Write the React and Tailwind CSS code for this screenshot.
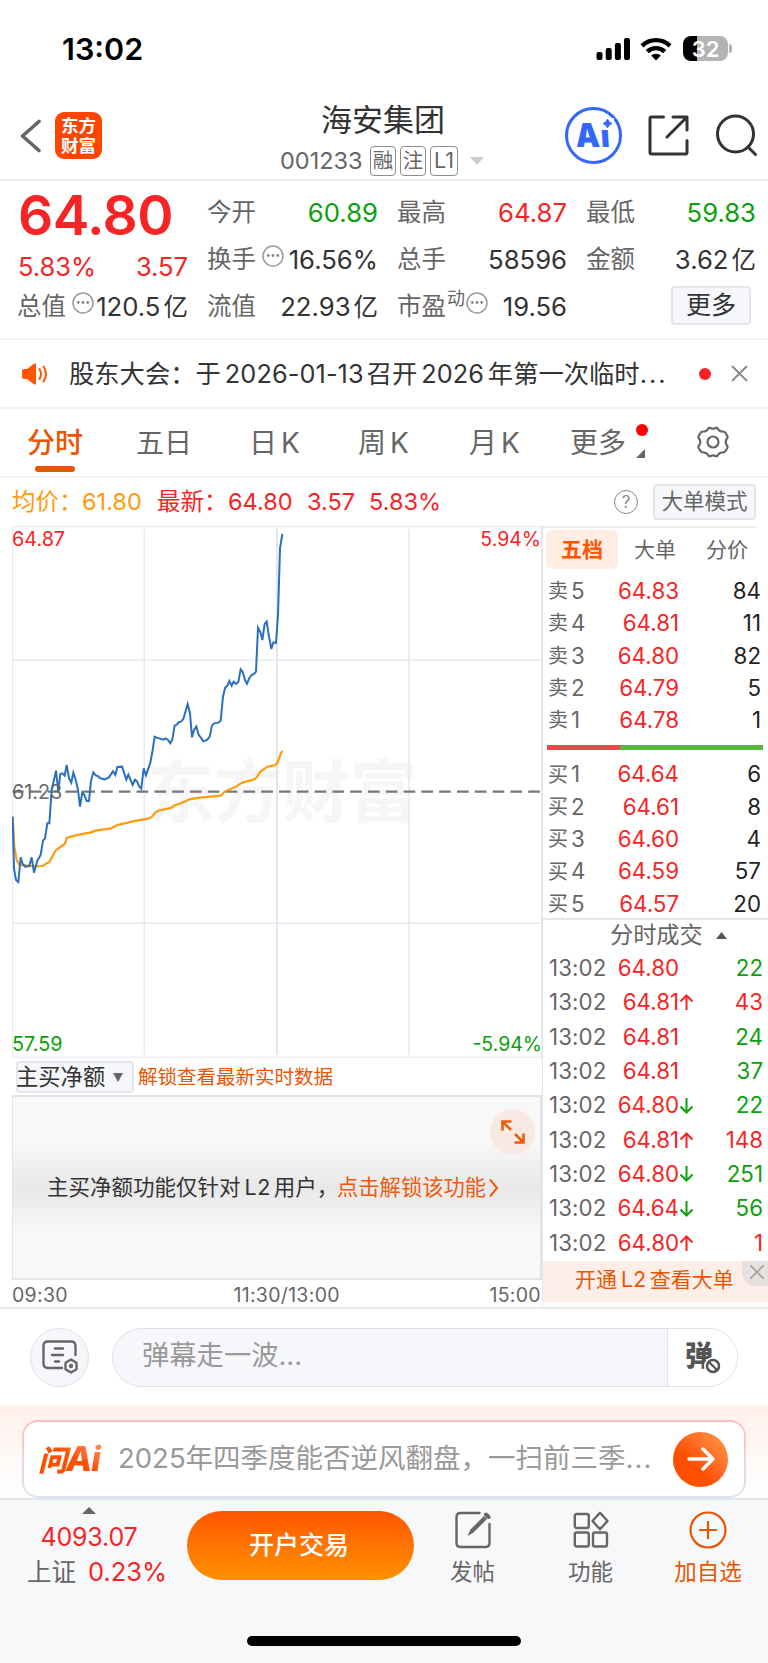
import React from "react";

const sells = [["卖5", "64.83", "84"], ["卖4", "64.81", "11"], ["卖3", "64.80", "82"], ["卖2", "64.79", "5"], ["卖1", "64.78", "1"]];
const buys = [["买1", "64.64", "6"], ["买2", "64.61", "8"], ["买3", "64.60", "4"], ["买4", "64.59", "57"], ["买5", "64.57", "20"]];
const trades = [
  ["64.80", "", "22", "g"], ["64.81", "up", "43", "r"], ["64.81", "", "24", "g"], ["64.81", "", "37", "g"], ["64.80", "down", "22", "g"],
  ["64.81", "up", "148", "r"], ["64.80", "down", "251", "g"], ["64.64", "down", "56", "g"], ["64.80", "up", "1", "r"],
];

const PRICE = "38,890 42,1045 48,1080 55,1086 62,1012 67,1030 75,1040 88,1038 95,1012 102,1058 112,1022 122,1005 129,962 135,955 142,910 148,910 155,810 168,752 175,815 181,762 187,760 194,767 200,735 207,775 214,788 220,758 228,782 234,810 240,860 247,817 253,825 260,843 267,843 273,782 280,757 287,766 293,768 300,774 313,778 326,773 339,754 346,765 352,741 366,740 379,779 385,764 398,795 405,779 411,784 418,800 424,806 431,745 438,766 451,728 458,690 464,650 470,653 490,659 497,655 504,660 511,670 517,658 524,617 530,614 537,606 543,605 550,597 563,552 570,580 576,652 582,630 589,620 596,645 602,652 610,664 622,659 629,650 636,617 642,610 655,608 662,602 669,530 675,504 682,497 688,483 695,497 701,485 708,492 715,486 722,448 728,456 735,480 741,491 748,474 754,466 762,462 768,455 774,323 781,336 787,360 794,312 800,305 807,350 814,387 820,367 828,369 834,285 840,85 847,42";
const AVERAGE = "38,890 43,980 50,1020 58,1034 75,1036 100,1039 128,1038 135,1033 148,1026 168,990 194,972 201,953 240,943 273,937 287,932 333,925 352,915 385,908 398,904 445,896 455,891 466,878 475,872 515,863 522,857 550,847 568,838 600,833 662,827 675,814 708,800 726,788 764,778 770,772 780,756 802,740 827,735 834,725 841,704 847,692";

function StatusBar() {
  return (
    <div className="flex h-[95px] items-start justify-between pl-[62px] pr-[36px] pt-[33px]">
      <span className="text-[30.500px] font-semibold leading-[31px] text-black">13:02</span>
      <div className="flex items-center gap-[9px] pt-[3px]">
        <svg width="35" height="24" viewBox="0 0 35 24">
          <rect x="0.5" y="15" width="6" height="8" rx="2" />
          <rect x="9.7" y="11" width="6" height="12" rx="2" />
          <rect x="18.9" y="6" width="6" height="17" rx="2" />
          <rect x="28" y="1" width="6" height="22" rx="2" />
        </svg>
        <svg width="32" height="24" viewBox="0 0 32 24" fill="none" stroke="#000" strokeWidth="4.400">
          <path d="M2 8.800a20.200 20.200 0 0 1 28 0" />
          <path d="M7.300 14.600a12.600 12.600 0 0 1 17.400 0" />
          <path d="M11.200 18.600a7 7 0 0 1 9.600 0L16 23.600z" fill="#000" stroke="none" />
        </svg>
        <div className="ml-[2px] flex items-center gap-[1px]">
          <div className="flex h-[25px] w-[45px] items-center justify-center rounded-[8px] bg-linear-to-r from-black from-32% to-[#b3b3b3] to-32%">
            <span className="text-[22px] font-semibold leading-none text-white">32</span>
          </div>
          <div className="h-[9px] w-[3px] rounded-r-full bg-[#b3b3b3]" />
        </div>
      </div>
    </div>
  );
}

function Header() {
  return (
    <header className="flex h-[86px] border-b-2 border-[#ededef]">
      <svg className="ml-[19px] mt-[24px]" width="24" height="34" viewBox="0 0 24 34" fill="none" stroke="#666" strokeWidth="3.600" strokeLinecap="round" strokeLinejoin="round"><path d="M20 2.500 3.500 17l16.500 14.500" /></svg>
      <div className="ml-[12px] mt-[17px] flex h-[47px] w-[47px] flex-col items-center justify-center rounded-[9px] bg-[#ff4500] text-[17.500px] font-bold leading-[20px] text-white">
        <span>东方</span>
        <span>财富</span>
      </div>
      <div className="ml-[163px] mt-[7px] flex w-[236px] flex-col items-center">
        <h1 className="text-[31px] leading-[35px] text-[#333]">海安集团</h1>
        <div className="mt-[9px] flex w-[206px] items-center text-[#666]">
          <span className="w-[90px] text-[23.500px] leading-[30px]">001233</span>
          <div className="flex gap-[4px] text-[20.500px] leading-none">
            <span className="flex h-[30px] w-[26px] items-center justify-center rounded-[4px] border border-[#8c8c8c]">融</span>
            <span className="flex h-[30px] w-[26px] items-center justify-center rounded-[4px] border border-[#8c8c8c]">注</span>
            <span className="flex h-[30px] w-[28px] items-center justify-center rounded-[4px] border border-[#8c8c8c] text-[21.500px]">L1</span>
          </div>
          <svg className="ml-[12px] shrink-0" width="14" height="8" viewBox="0 0 14 8"><path d="M0 0h14L7 8z" fill="#ccc" /></svg>
        </div>
      </div>
      <div className="relative ml-[64px] mt-[12px] flex h-[57px] w-[57px] items-center justify-center rounded-full border-[3px] border-[#3366fa]">
        <span className="-ml-[1px] -mt-[1px] skew-x-4 scale-x-92 text-[33px] font-black leading-none tracking-[1px] text-[#3366fa]">Ai</span>
        <svg className="absolute left-[32px] top-[8px]" width="14" height="13" viewBox="0 0 14 13"><path d="M0 0h14v12H0z" fill="#fff" /><path d="M7.500 1Q8.800 4.500 12 5.500 8.800 6.500 7.500 10 6.200 6.500 3 5.500 6.200 4.500 7.500 1z" fill="#3366fa" stroke="#3366fa" strokeWidth="0.800" strokeLinejoin="round" /></svg>
      </div>
      <svg className="ml-[26px] mt-[20px]" width="41" height="41" viewBox="0 0 41 41" fill="none" stroke="#333" strokeWidth="3" strokeLinecap="round" strokeLinejoin="round"><path d="M15.500 2H3.500Q2 2 2 3.500v34Q2 39 3.500 39H37.500Q39 39 39 37.500V25.500M25 2h14v13M38.500 2.500 19 22" /></svg>
      <svg className="ml-[27px] mt-[19px]" width="42" height="42" viewBox="0 0 42 42" fill="none" stroke="#333" strokeWidth="3" strokeLinecap="round"><circle cx="19.500" cy="20" r="18" /><path d="m32 33 7.500 7.500" /></svg>
    </header>
  );
}

function Dots({ className }) {
  return (
    <svg className={className} width="22" height="22" viewBox="0 0 22 22"><circle cx="11" cy="11" r="10" fill="none" stroke="#999" strokeWidth="1.500" /><g fill="#888"><circle cx="6.300" cy="10.500" r="1.400" /><circle cx="11" cy="10.500" r="1.400" /><circle cx="15.700" cy="10.500" r="1.400" /></g></svg>
  );
}

function Stat({ label, value, unit, color = "text-[#333]", extra }) {
  return (
    <div className="flex h-[47px] items-center justify-between">
      <span className="-ml-[1px] flex items-center text-[24.500px] leading-none text-[#666]">{label}{extra}</span>
      <span className={"whitespace-nowrap text-[25.700px] leading-none " + color}>{value}{unit && <span className="ml-[3px] text-[24.500px]">{unit}</span>}</span>
    </div>
  );
}

function Quote() {
  return (
    <section className="grid h-[159px] grid-cols-[170px_170px_169px_169px] gap-x-[20px] border-b-2 border-[#f4f4f5] pl-[18px] pt-[8px]">
      <div>
        <div className="h-[58px] text-[55px] font-semibold leading-[52px] tracking-[-0.500px] text-[#f62424]">64.80</div>
        <div className="flex h-[36px] items-center justify-between pt-[3px] text-[25.500px] leading-none text-[#f62424]"><span>5.83%</span><span>3.57</span></div>
        <Stat label="总值" value="120.5" unit="亿" extra={<Dots className="-mr-4 -mt-[8px] ml-[6px]" />} />
      </div>
      <div>
        <Stat label="今开" value="60.89" color="text-[#0ca00c]" />
        <Stat label="换手" value="16.56%" extra={<Dots className="-mr-2 -mt-[8px] ml-[6px]" />} />
        <Stat label="流值" value="22.93" unit="亿" />
      </div>
      <div>
        <Stat label="最高" value="64.87" color="text-[#f62424]" />
        <Stat label="总手" value="58596" />
        <Stat label="市盈" value="19.56" extra={<><span className="-mt-[16px] ml-[1px] text-[18px]">动</span><Dots className="-mt-[8px] ml-[1px]" /></>} />
      </div>
      <div>
        <Stat label="最低" value="59.83" color="text-[#0ca00c]" />
        <Stat label="金额" value="3.62" unit="亿" />
        <button className="ml-auto mr-[5px] mt-[3px] block h-[39px] w-[80px] rounded-[4px] border-2 border-[#e2e5ea] bg-[#f6f7fa] text-[25px] leading-none text-[#333]">更多</button>
      </div>
    </section>
  );
}

function Notice() {
  return (
    <section className="flex h-[69px] items-center border-b-2 border-[#f4f4f5] pl-[22px]">
      <svg width="26" height="22" viewBox="0 0 26 22"><path d="M0 8q0-2 2-2h3l7-5.200q2-1.200 2 1v18.400q0 2.200-2 1L5 16H2q-2 0-2-2z" fill="#ff5500" /><path d="M17.500 6q3 5 0 10M21.500 3.500q5 7.500 0 15" fill="none" stroke="#ff5500" strokeWidth="2" strokeLinecap="round" /></svg>
      <span className="ml-[21px] w-[609px] whitespace-nowrap text-[25.300px] leading-none text-[#333]">股东大会：于<span className="ml-[4px] mr-[3px] tracking-[0.100px]">2026-01-13</span>召开<span className="mx-[4px]">2026</span>年第一次临时<span className="tracking-[2px]">...</span></span>
      <span className="ml-[21px] h-[12px] w-[12px] rounded-full bg-[#f62424]" />
      <svg className="ml-[20px]" width="17" height="17" viewBox="0 0 17 17" stroke="#888" strokeWidth="1.800"><path d="m1 1 15 15M16 1 1 16" /></svg>
    </section>
  );
}

function Tabs() {
  return (
    <nav className="flex h-[69px] border-b-2 border-[#f4f4f5] pt-[18px] text-[28px] leading-[32px] text-[#666]">
      <div className="ml-[27px] flex w-[56px] flex-col items-center font-medium text-[#ea5504]">分时<span className="mt-[7px] h-[6px] w-[40px] rounded-[3px] bg-[#ea5504]" /></div>
      <span className="ml-[53px] w-[56px]">五日</span>
      <span className="ml-[57px] w-[53px] whitespace-nowrap">日<span className="ml-[4px]">K</span></span>
      <span className="ml-[56px] w-[54px] whitespace-nowrap">周<span className="ml-[4px]">K</span></span>
      <span className="ml-[57px] w-[54px] whitespace-nowrap">月<span className="ml-[4px]">K</span></span>
      <span className="ml-[47px] w-[57px]">更多</span>
      <div className="ml-[9px] flex w-[12px] flex-col items-start"><span className="-mt-[3px] h-[12px] w-[12px] rounded-full bg-[#f00]" /><svg className="mt-[13px]" width="9" height="9" viewBox="0 0 9 9"><path d="M9 0v9H0z" fill="#666" /></svg></div>
      <svg className="ml-[49px] -mt-[1px]" width="32" height="32" viewBox="0 0 32 32" fill="none" stroke="#666" strokeWidth="2.200" strokeLinejoin="round"><path d="M11 3Q12 1.200 13.600 2Q16 3.400 18.400 2Q20 1.200 21 3Q22.200 5.500 25.500 5.500Q27.800 5.500 28.700 7.200L30.300 10Q31 11.800 29.700 13Q27.600 16 29.700 19Q31 20.200 30.300 22L28.700 24.800Q27.800 26.500 25.500 26.500Q22.200 26.500 21 29Q20 30.800 18.400 30Q16 28.600 13.600 30Q12 30.800 11 29Q9.800 26.500 6.500 26.500Q4.200 26.500 3.300 24.800L1.700 22Q1 20.200 2.300 19Q4.400 16 2.300 13Q1 11.800 1.700 10L3.300 7.200Q4.200 5.500 6.500 5.500Q9.800 5.500 11 3Z" /><circle cx="16" cy="16" r="5.500" /></svg>
    </nav>
  );
}

function Summary() {
  return (
    <div className="flex h-[48px] items-center whitespace-nowrap pl-[12px] pr-[12px] text-[23.500px] leading-none text-[#f62424]">
      <span className="w-[70px] text-[#ff9a0a]">均价：</span>
      <span className="w-[75px] text-[#ff9a0a]">61.80</span>
      <span className="w-[71px]">最新：</span>
      <span className="w-[79px]">64.80</span>
      <span className="w-[62px]">3.57</span>
      <span>5.83%</span>
      <span className="ml-auto flex h-[24px] w-[24px] items-center justify-center rounded-full border-[1.500px] border-[#888] text-[17px] text-[#888]">?</span>
      <button className="ml-[15px] h-[36px] w-[103px] rounded-[4px] border-2 border-[#e2e5ea] bg-[#f6f7fa] text-[21.500px] leading-none text-[#666]">大单模式</button>
    </div>
  );
}

function Chart() {
  return (
    <div className="relative h-[532px]">
      <svg className="block" width="530" height="532" viewBox="36 18 1590 1596" fill="none">
        <text x="440" y="892" fontSize="203" fontWeight="700" fill="#f6f6f6" fontFamily="Noto Sans CJK SC, sans-serif">东方财富</text>
        <path d="M38 1614V20H1626M38 1611.500H1626M1624.500 20V1614" stroke="#e3e6eb" strokeWidth="3" />
        <path d="M38 421H1624M38 1210H1624M433 27V1604M1227 27V1604" stroke="#e6e9f2" strokeWidth="4.500" />
        <path d="M831 27V1604" stroke="#e3e6ee" strokeWidth="6" />
        <path d="M38 815H1620" stroke="#777" strokeWidth="7" strokeDasharray="35 18.400" strokeDashoffset="2" />
        <polyline points={AVERAGE} stroke="#ff9a0a" strokeWidth="6.500" />
        <polyline points={PRICE} stroke="#2b70bf" strokeWidth="6" />
      </svg>
      <span className="absolute left-0 top-[4px] text-[19.800px] leading-[19px] text-[#f62424]">64.87</span>
      <span className="absolute right-[1px] top-[4px] text-[19.500px] leading-[19px] text-[#f62424]">5.94%</span>
      <span className="absolute left-0 top-[257px] text-[19.800px] leading-[19px] text-[#666]">61.23</span>
      <span className="absolute bottom-[4px] left-0 text-[19.800px] leading-[19px] text-[#0ca00c]">57.59</span>
      <span className="absolute bottom-[4px] right-0 text-[19.500px] leading-[19px] text-[#0ca00c]">-5.94%</span>
    </div>
  );
}

function Locked() {
  return (
    <>
      <div className="flex h-[37px] items-center pl-[4px] pt-[1px]">
        <button className="flex h-[32px] w-[118px] items-center whitespace-nowrap rounded-[4px] border-2 border-[#e2e5ea] bg-[#f6f7fa] text-[22.300px] leading-none text-[#333]"><span className="-ml-[2px]">主买净额</span><svg className="ml-[8px] shrink-0" width="10" height="9" viewBox="0 0 10 9"><path d="M0 0h10L5 9z" fill="#666" /></svg></button>
        <span className="ml-[4px] mt-[2px] whitespace-nowrap text-[19.500px] leading-none text-[#ea5504]">解锁查看最新实时数据</span>
      </div>
      <div className="relative flex h-[185px] items-center whitespace-nowrap border-2 border-l border-[#e1e4e9] bg-linear-to-b from-[#f8f8f8] from-25% via-[#e8e8e8] via-50% to-[#f8f8f8] to-75% pl-[34px] text-[21.500px] leading-none">
        <span className="w-[290px] text-[#333]">主买净额功能仅针对<span className="ml-[4px] mr-[3px] tracking-[0.500px]">L2</span>用户，</span>
        <span className="text-[21.300px] text-[#f05a0a]">点击解锁该功能</span>
        <svg className="ml-[3px]" width="11" height="20" viewBox="0 0 11 20" fill="none" stroke="#f05a0a" strokeWidth="2"><path d="m1 1.500 7 8.500-7 8.500" /></svg>
        <div className="absolute right-[5px] top-[12px] flex h-[46px] w-[45px] items-center justify-center rounded-full bg-[#f8eae3]">
          <svg width="24" height="24" viewBox="0 0 24 24" fill="none" stroke="#ee5a10" strokeWidth="2.600"><path d="M10.500 1.500h-9v9M1.500 1.500l8.500 8.500M13.500 22.500h9v-9M22.500 22.500 14 14" /></svg>
        </div>
      </div>
      <div className="flex h-[27px] items-center justify-between pr-[1px] pt-[4px] text-[19.500px] leading-none tracking-[0.300px] text-[#666]"><span>09:30</span><span className="ml-[16px]">11:30/13:00</span><span>15:00</span></div>
    </>
  );
}

function Level({ row }) {
  return (
    <div className="grid h-[32.300px] grid-cols-[50px_81px_1fr] items-center pl-[5px] pr-[7px] text-[22.300px] leading-none">
      <span className="flex items-center gap-[3px] text-[#666]"><span className="text-[20px]">{row[0][0]}</span><span>{row[0][1]}</span></span>
      <span className="text-right text-[#f62424]">{row[1]}</span>
      <span className="text-right text-[#222]">{row[2]}</span>
    </div>
  );
}

function OrderBook() {
  return (
    <aside className="h-[781px] w-[226px] border-l border-[#e3e6eb]">
      <div className="w-[213px] border-t-2 border-[#ebecef]" />
      <div className="flex h-[45px] items-center gap-[16px] whitespace-nowrap pb-[2px] pl-[3px] text-[21px] leading-none text-[#666]">
        <span className="flex h-[39px] w-[72px] items-center justify-center rounded-[6px] bg-[#ffede4] font-bold text-[#ff5500]">五档</span>
        <span>大单</span>
        <span className="ml-[14px]">分价</span>
      </div>
      <div className="pt-[2px]">{sells.map((r) => <Level key={r[0]} row={r} />)}</div>
      <div className="ml-[4px] mt-[9px] h-[5px] w-[216px] bg-linear-115 from-[#e84a4a] from-34% to-[#5ab53e] to-34%" />
      <div className="pt-[8px]">{buys.map((r) => <Level key={r[0]} row={r} />)}</div>
      <div className="-mt-[2px] flex h-[33px] items-center border-t-2 border-[#e3e6eb] pl-[67px] pt-[1px] text-[23.200px] leading-none text-[#666]">分时成交<svg className="ml-[13px]" width="11" height="7" viewBox="0 0 11 7"><path d="M0 7h11L5.500 0z" fill="#555" /></svg></div>
      <div>
        {trades.map((t, i) => (
          <div key={i} className="grid h-[34.350px] grid-cols-[61px_69px_16px_1fr] items-center pl-[6px] pr-[5px] text-[22.300px] leading-none">
            <span className="tracking-[0.100px] text-[#666]">13:02</span>
            <span className="text-right text-[#f62424]">{t[0]}</span>
            <span className="flex">
              {t[1] === "up" && <svg width="15" height="16" viewBox="0 0 15 16" fill="none" stroke="#f62424" strokeWidth="2"><path d="M7.500 16V1.500M1.500 7.500l6-6 6 6" /></svg>}
              {t[1] === "down" && <svg width="15" height="16" viewBox="0 0 15 16" fill="none" stroke="#0ca00c" strokeWidth="2"><path d="M7.500 0v14.500M1.500 8.500l6 6 6-6" /></svg>}
            </span>
            <span className={t[3] === "r" ? "text-right text-[#f62424]" : "text-right text-[#0ca00c]"}>{t[2]}</span>
          </div>
        ))}
      </div>
      <div className="mt-[1px] flex h-[41px] items-start justify-between bg-[#fdefe8] pl-[32px]">
        <span className="whitespace-nowrap text-[21px] leading-[38px] text-[#ea5504]">开通<span className="ml-[4px] mr-[3px] tracking-[0.500px]">L2</span>查看大单</span>
        <span className="flex h-[25px] w-[26px] items-center justify-center rounded-bl-[14px] bg-[#e6e0de]"><svg className="ml-[3px] mt-[-3px]" width="14" height="14" viewBox="0 0 14 14" stroke="#999" strokeWidth="1.500"><path d="m0 0 14 14M14 0 0 14" /></svg></span>
      </div>
    </aside>
  );
}

function CommentBar() {
  return (
    <section className="flex h-[98px] items-center border-t-2 border-[#ebebed] pl-[30px] pr-[30px]">
      <div className="flex h-[59px] w-[59px] items-center justify-center rounded-full border border-[#dfe1e6] bg-[#f6f7fa]">
        <svg width="36" height="34" viewBox="0 0 36 34" fill="none" stroke="#666" strokeWidth="2.400" strokeLinecap="round"><path d="M20 28H6q-4.500 0-4.500-4.500V6Q1.500 1.500 6 1.500h23Q33.500 1.500 33.500 6v9M13 8.500h8M10 15h11M13 21.500h4" /><path d="m29 19.500 5.500 3.300v6.400L29 32.500l-5.500-3.300v-6.400z" strokeLinejoin="round" /><circle cx="29" cy="26" r="1" fill="#666" /></svg>
      </div>
      <div className="ml-[23px] flex h-[59px] w-[626px] overflow-hidden rounded-full border-[1.500px] border-[#dfe1e6] bg-[#f6f7fa]">
        <span className="w-[555px] border-r border-[#dfe1e6] pl-[29px] text-[27.300px] leading-[53px] text-[#999]">弹幕走一波...</span>
        <div className="flex flex-1 items-start bg-white pl-[17px] pt-[12px]">
          <span className="text-[28px] font-black leading-[30px] text-[#555]">弹</span>
          <svg className="-ml-[9px] mt-[16px] shrink-0" width="18" height="18" viewBox="0 0 18 18"><circle cx="9" cy="9" r="9" fill="#fff" /><circle cx="9" cy="9" r="6" fill="none" stroke="#555" strokeWidth="2.500" /><path d="m5 5 8 8" stroke="#555" strokeWidth="2.300" /></svg>
        </div>
      </div>
    </section>
  );
}

function AskAi() {
  return (
    <section className="h-[93px] bg-linear-to-b from-[#fff1ec] to-white px-[22px] pt-[15px]">
      <div className="h-[78px] rounded-[16px] bg-linear-to-b from-[#ffc0b6] to-[#dde2f5] p-[2px]">
        <div className="flex h-full items-center rounded-[14px] bg-white pl-[14px] pr-[16px]">
          <span className="w-[67px] whitespace-nowrap bg-linear-to-tr from-[#ff5000] from-55% to-[#ff9a60] bg-clip-text text-[34px] font-extrabold italic leading-none tracking-[-1px] text-transparent"><span className="text-[29px] font-black">问</span>Ai</span>
          <span className="ml-[13px] w-[540px] whitespace-nowrap text-[27.500px] leading-none text-[#999]">2025年四季度能否逆风翻盘，一扫前三季<span className="tracking-[1px]">...</span></span>
          <div className="ml-auto flex h-[55px] w-[55px] shrink-0 items-center justify-center rounded-full bg-linear-to-tr from-[#ff5000] from-40% to-[#ff9a48]">
            <svg width="28" height="24" viewBox="0 0 28 24" fill="none" stroke="#fff" strokeWidth="3.400" strokeLinecap="round" strokeLinejoin="round"><path d="M2 12h24M16 2l10 10-10 10" /></svg>
          </div>
        </div>
      </div>
    </section>
  );
}

function BottomBar() {
  return (
    <footer className="flex h-[165px] flex-col border-t-2 border-[#e4e6ea] bg-[#f7f8fa]">
      <div className="flex h-[100px] text-[22.500px] leading-none text-[#666]">
        <div className="ml-[22px] flex w-[150px] flex-col items-center pt-[7px] text-[24.500px]">
          <svg className="-ml-[16px]" width="14" height="7" viewBox="0 0 14 7"><path d="M0 7h14L7 0z" fill="#666" /></svg>
          <span className="-ml-[16px] mt-[11px] text-[25px] tracking-[-0.200px] text-[#f62424]">4093.07</span>
          <span className="mt-[9px] whitespace-nowrap">上证 <span className="ml-[5px] text-[25.500px] text-[#f62424]">0.23%</span></span>
        </div>
        <button className="ml-[15px] mt-[11px] h-[69px] w-[227px] rounded-full bg-linear-to-b from-[#ff5500] to-[#ff9000] pr-[3px] text-[25px] font-medium leading-none text-white">开户交易</button>
        <div className="ml-[36px] flex w-[45px] flex-col items-center pt-[11px]">
          <svg width="36" height="38" viewBox="0 0 36 38" fill="none" stroke="#666"><path d="M24.500 2H5.500Q1.500 2 1.500 6v26q0 4 4 4h25q4 0 4-4V13" strokeWidth="2.400" strokeLinecap="round" /><path d="m12.500 25 3-6.500L29 5l3 3-13.500 13.500z" fill="#666" stroke="none" /><path d="m31 3.500 2.500 2.500" strokeWidth="4" strokeLinecap="round" /></svg>
          <span className="mt-[12px]">发帖</span>
        </div>
        <div className="ml-[73px] flex w-[45px] flex-col items-center pt-[11px]">
          <svg width="36" height="38" viewBox="0 0 36 38" fill="none" stroke="#666" strokeWidth="2.400" strokeLinejoin="round"><rect x="1.800" y="3" width="14" height="14" rx="2" /><rect x="1.800" y="21.500" width="14" height="14" rx="2" /><rect x="20" y="21.500" width="14" height="14" rx="2" /><path d="m27 1.800 7.500 8.200-7.500 8.200-7.500-8.200z" /></svg>
          <span className="mt-[12px]">功能</span>
        </div>
        <div className="ml-[61px] flex w-[68px] flex-col items-center pt-[11px] text-[#ea5504]">
          <svg width="38" height="38" viewBox="0 0 38 38" fill="none" stroke="#ea5504" strokeWidth="2.200"><circle cx="19" cy="19" r="17.500" /><path d="M19 10v18M10 19h18" /></svg>
          <span className="mt-[12px] whitespace-nowrap">加自选</span>
        </div>
      </div>
      <div className="mx-auto mt-[36px] h-[10px] w-[274px] rounded-full bg-black" />
    </footer>
  );
}

export default function App() {
  return (
    <div className="h-[1663px] w-[768px] overflow-hidden bg-white font-['Inter','Noto_Sans_CJK_SC',sans-serif]">
      <StatusBar />
      <Header />
      <Quote />
      <Notice />
      <Tabs />
      <Summary />
      <main className="flex h-[781px]">
        <div className="ml-[12px] w-[530px]">
          <Chart />
          <Locked />
        </div>
        <OrderBook />
      </main>
      <CommentBar />
      <AskAi />
      <BottomBar />
    </div>
  );
}
